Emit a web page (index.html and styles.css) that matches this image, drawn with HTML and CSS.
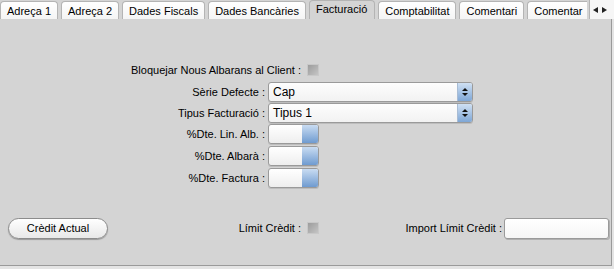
FILE: index.html
```html
<!DOCTYPE html>
<html lang="ca">
<head>
  <meta charset="UTF-8" />
  <title>Facturació</title>
  <link rel="stylesheet" href="styles.css">
</head>
<body>
  <div class="tabbar">
    <div class="tabs">
      <div class="tab">Adreça 1</div>
      <div class="tab">Adreça 2</div>
      <div class="tab">Dades Fiscals</div>
      <div class="tab">Dades Bancàries</div>
      <div class="tab active">Facturació</div>
      <div class="tab">Comptabilitat</div>
      <div class="tab">Comentari</div>
      <div class="tab last">Comentar</div>
    </div>
    <div class="scroller"><span class="arr left"></span><span class="arr right"></span></div>
  </div>

  <div class="panel">
    <div class="form">
      <div class="row first">
        <label class="lbl wide">Bloquejar Nous Albarans al Client :</label>
        <span class="check"></span>
      </div>
      <div class="row">
        <label class="lbl">Sèrie Defecte :</label>
        <div class="select"><span class="val">Cap</span><span class="spin"><i class="up"></i><i class="down"></i></span></div>
      </div>
      <div class="row">
        <label class="lbl">Tipus Facturació :</label>
        <div class="select"><span class="val">Tipus 1</span><span class="spin"><i class="up"></i><i class="down"></i></span></div>
      </div>
      <div class="row num-row">
        <label class="lbl">%Dte. Lin. Alb. :</label>
        <div class="num"><span class="num-btn"></span></div>
      </div>
      <div class="row num-row">
        <label class="lbl">%Dte. Albarà :</label>
        <div class="num"><span class="num-btn"></span></div>
      </div>
      <div class="row num-row">
        <label class="lbl">%Dte. Factura :</label>
        <div class="num"><span class="num-btn"></span></div>
      </div>
    </div>

    <div class="bottom">
      <button class="pill">Crèdit Actual</button>
      <label class="lbl b1">Límit Crèdit :</label>
      <span class="check"></span>
      <label class="lbl b2">Import Límit Crèdit :</label>
      <div class="text-input"></div>
    </div>
  </div>
</body>
</html>
```

FILE: styles.css
```css
body {
  margin: 0;
  font-family: "Liberation Sans", Arial, sans-serif;
  font-size: 11px;
  color: #000;
  background: #e4e4e4;
  width: 614px;
  height: 269px;
  overflow: hidden;
}

.tabbar {
  display: flex;
  height: 19px;
  background: #d4d4d4;
  overflow: hidden;
}

.tabs {
  display: flex;
  gap: 3px;
  width: 589px;
  overflow: hidden;
  flex-shrink: 0;
}

.tab {
  flex-shrink: 0;
  height: 18px;
  margin-top: 1px;
  padding: 0 6px;
  line-height: 19px;
  background: linear-gradient(#ffffff, #f4f4f4);
  border: 1px solid #b4b4b4;
  border-bottom: none;
  border-radius: 4px 4px 0 0;
  white-space: nowrap;
}

.tab.active {
  background: #d4d4d4;
  height: 19px;
  margin-top: 0;
  line-height: 16px;
  padding: 0 7px 0 6px;
}

.tab.last {
  padding-right: 4px;
  border-right: none;
  border-radius: 4px 0 0 0;
}

.scroller {
  flex: 1;
  display: flex;
  align-items: center;
  gap: 4px;
  padding-left: 3px;
  background: #f6f6f6;
  border-left: 1px solid #b4b4b4;
}

.arr {
  width: 0;
  height: 0;
  border-top: 3px solid transparent;
  border-bottom: 3px solid transparent;
}

.arr.left { border-right: 5px solid #222; }
.arr.right { border-left: 5px solid #222; }

.panel {
  width: 611px;
  height: 246px;
  background: #d4d4d4;
  border-right: 1px solid #9a9a9a;
  border-bottom: 1px solid #9a9a9a;
  display: flex;
  flex-direction: column;
}

.form {
  display: flex;
  flex-direction: column;
  padding-top: 45px;
}

.row {
  display: flex;
  align-items: center;
  height: 21px;
}

.row.first {
  height: 12px;
  margin-bottom: 5px;
}

.row.num-row {
  height: 22px;
}

.lbl {
  text-align: right;
  white-space: nowrap;
  padding-right: 3px;
  box-sizing: border-box;
  width: 268px;
}

.lbl.wide {
  width: 307px;
  padding-right: 6px;
}

.check {
  width: 12px;
  height: 12px;
  box-sizing: border-box;
  border: 1px solid #c8c8c8;
  background: linear-gradient(135deg, #9c9c9c, #c4c4c4);
  flex-shrink: 0;
}

.select {
  width: 205px;
  height: 20px;
  box-sizing: border-box;
  display: flex;
  border: 1px solid #9a9a9a;
  border-radius: 3px;
  background: linear-gradient(#fdfdfd, #f2f2f2);
  box-shadow: 0 1px 0 #bdbdbd;
  overflow: hidden;
}

.val {
  flex: 1;
  padding-left: 4px;
  line-height: 18px;
  font-size: 12px;
}

.spin {
  width: 14px;
  display: flex;
  flex-direction: column;
  align-items: center;
  justify-content: center;
  gap: 2px;
  background: linear-gradient(#cfe0f3, #7fa7d6);
  border-left: 1px solid #a8bcd4;
}

.spin i {
  width: 0;
  height: 0;
  border-left: 3px solid transparent;
  border-right: 3px solid transparent;
}

.spin .up { border-bottom: 3px solid #111; }
.spin .down { border-top: 3px solid #111; }

.num {
  width: 51px;
  height: 20px;
  box-sizing: border-box;
  display: flex;
  justify-content: flex-end;
  border: 1px solid #9a9a9a;
  border-radius: 3px;
  background: linear-gradient(#ffffff, #eeeeee);
  box-shadow: 0 1px 0 #bdbdbd;
  overflow: hidden;
}

.num-btn {
  width: 16px;
  background: linear-gradient(#c9dcf2, #6f9bd0);
}

.bottom {
  display: flex;
  align-items: center;
  margin-top: 28px;
  padding-left: 8px;
  height: 22px;
}

.pill {
  width: 100px;
  height: 21px;
  padding: 0;
  font-family: inherit;
  font-size: 11px;
  color: #000;
  border: 1px solid #8c8c8c;
  border-radius: 11px;
  background: linear-gradient(#ffffff, #e8e8e8);
  box-shadow: 0 1px 1px #9a9a9a;
}

.lbl.b1 {
  width: 199px;
  padding-right: 6px;
}

.lbl.b2 {
  width: 185px;
  padding-right: 2px;
}

.text-input {
  width: 105px;
  height: 21px;
  box-sizing: border-box;
  border: 1px solid #9a9a9a;
  border-radius: 3px;
  background: linear-gradient(#ffffff, #f6f6f6);
  box-shadow: 1px 1px 0 #b0b0b0;
}
```
